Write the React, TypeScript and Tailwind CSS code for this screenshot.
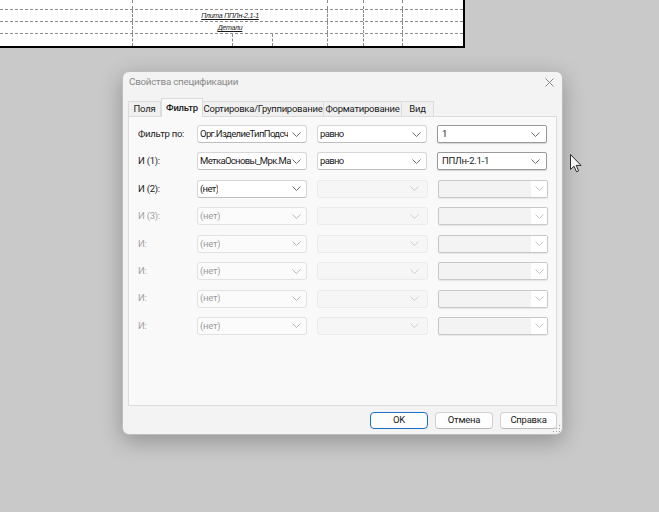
import React from "react";

type Variant = "enabled" | "edit" | "dis1" | "dis2" | "editDis";

function Chevron({ color }: { color: string }) {
  return (
    <svg width="9" height="5" viewBox="0 0 9 5" className="shrink-0">
      <path d="M0.5 0.5 L4.5 4.5 L8.5 0.5" fill="none" stroke={color} strokeWidth="1" />
    </svg>
  );
}

function Combo({ v, text }: { v: Variant; text?: string }) {
  if (v === "enabled") {
    return (
      <div className="flex h-[18px] w-[110px] items-center justify-between rounded-[3px] border border-[#d6d6d6] border-b-[#bdbdbd] bg-white pl-[2px] pr-[5px]">
        <span className="min-w-0 overflow-hidden whitespace-nowrap tracking-[-0.65px] text-[#1b1b1b]">{text}</span>
        <Chevron color="#6a6a6a" />
      </div>
    );
  }
  if (v === "edit") {
    return (
      <div className="flex h-[18px] w-[110px] items-center justify-between rounded-[2px] border border-[#9a9a9a] bg-white pl-[4px] pr-[6px] shadow-[0_1px_1px_rgba(0,0,0,0.15)]">
        <span className="min-w-0 overflow-hidden whitespace-nowrap text-[#1b1b1b]">{text}</span>
        <Chevron color="#6a6a6a" />
      </div>
    );
  }
  if (v === "dis1") {
    return (
      <div className="flex h-[18px] w-[110px] items-center justify-between rounded-[3px] border border-[#e2e2e2] bg-[#fbfbfb] pl-[2px] pr-[5px]">
        <span className="min-w-0 overflow-hidden whitespace-nowrap text-[#9c9c9c]">{text}</span>
        <Chevron color="#b8b8b8" />
      </div>
    );
  }
  if (v === "dis2") {
    return (
      <div className="flex h-[18px] w-[111px] items-center justify-end rounded-[3px] border border-[#ebebeb] bg-[#f6f6f6] pr-[8px]">
        <Chevron color="#cfcfcf" />
      </div>
    );
  }
  return (
    <div className="flex h-[18px] w-[110px] items-center rounded-[2px] border border-[#c8c8c8] bg-[#f3f3f3] shadow-[0_1px_1px_rgba(0,0,0,0.08)]">
      <div className="h-full flex-1" />
      <div className="flex h-full w-[16px] items-center justify-center bg-white">
        <Chevron color="#c4c4c4" />
      </div>
    </div>
  );
}

const rows: { label: string; dim: boolean; c1: [Variant, string]; c2: [Variant, string]; c3: [Variant, string] }[] = [
  { label: "Фильтр по:", dim: false, c1: ["enabled", "Орг.ИзделиеТипПодсч"], c2: ["enabled", "равно"], c3: ["edit", "1"] },
  { label: "И (1):", dim: false, c1: ["enabled", "МеткаОсновы_Мрк.Ма"], c2: ["enabled", "равно"], c3: ["edit", "ППЛн-2.1-1"] },
  { label: "И (2):", dim: false, c1: ["enabled", "(нет)"], c2: ["dis2", ""], c3: ["editDis", ""] },
  { label: "И (3):", dim: true, c1: ["dis1", "(нет)"], c2: ["dis2", ""], c3: ["editDis", ""] },
  { label: "И:", dim: true, c1: ["dis1", "(нет)"], c2: ["dis2", ""], c3: ["editDis", ""] },
  { label: "И:", dim: true, c1: ["dis1", "(нет)"], c2: ["dis2", ""], c3: ["editDis", ""] },
  { label: "И:", dim: true, c1: ["dis1", "(нет)"], c2: ["dis2", ""], c3: ["editDis", ""] },
  { label: "И:", dim: true, c1: ["dis1", "(нет)"], c2: ["dis2", ""], c3: ["editDis", ""] },
];

function Drawing() {
  const cell = "border-r border-dashed border-[#8c8c8c]";
  const Row = ({ h, children, last }: { h: string; children?: React.ReactNode; last?: boolean }) => (
    <div className={`flex ${h} ${last ? "" : "border-b border-dashed border-[#8c8c8c]"}`}>{children}</div>
  );
  return (
    <div className="h-[48px] w-[465px] border-b-2 border-r-2 border-black bg-white font-['Liberation_Sans',sans-serif]">
      <Row h="h-[10px]">
        <div className={`w-[133px] ${cell}`} />
        <div className={`w-[195px] ${cell}`} />
        <div className={`w-[36px] ${cell}`} />
        <div className={`w-[39px] ${cell}`} />
      </Row>
      <Row h="h-[12px]">
        <div className={`w-[133px] ${cell}`} />
        <div className={`flex w-[195px] items-center justify-center ${cell}`}>
          <span className="text-[7px] italic leading-none text-[#1a1a1a] underline">Плита ППЛн-2.1-1</span>
        </div>
        <div className={`w-[36px] ${cell}`} />
        <div className={`w-[39px] ${cell}`} />
      </Row>
      <Row h="h-[12px]">
        <div className={`w-[133px] ${cell}`} />
        <div className={`flex w-[195px] items-center justify-center ${cell}`}>
          <span className="text-[7px] italic leading-none text-[#1a1a1a] underline">Детали</span>
        </div>
        <div className={`w-[36px] ${cell}`} />
        <div className={`w-[39px] ${cell}`} />
      </Row>
      <Row h="h-[12px]" last>
        <div className={`w-[133px] ${cell}`} />
        <div className={`w-[100px] ${cell}`} />
        <div className={`w-[40px] ${cell}`} />
        <div className={`w-[55px] ${cell}`} />
        <div className={`w-[36px] ${cell}`} />
        <div className={`w-[39px] ${cell}`} />
      </Row>
    </div>
  );
}

export default function App() {
  const tabs = [
    { t: "Поля", w: "w-[33px]" },
    { t: "Фильтр", w: "w-[42px]", sel: true },
    { t: "Сортировка/Группирование", w: "w-[122px]" },
    { t: "Форматирование", w: "w-[79px]" },
    { t: "Вид", w: "w-[33px]" },
  ];
  return (
    <div className="relative h-[512px] w-[659px] overflow-hidden bg-[#c9c9c9] font-['Roboto','Liberation_Sans',sans-serif] text-[9.5px] tracking-[-0.25px]">
      <Drawing />

      {/* Dialog window */}
      <div className="absolute left-[122px] top-[71px] flex h-[364px] w-[441px] flex-col rounded-[7px] border border-[#bdbdbd] bg-[#f3f3f3] shadow-[0_6px_22px_rgba(0,0,0,0.28)]">
        <div className="flex h-[21px] items-center justify-between pl-[6px] pr-[8px]">
          <span className="text-[9.8px] text-[#8a8a8a]">Свойства спецификации</span>
          <svg width="9" height="9" viewBox="0 0 9 9">
            <path d="M0.5 0.5 L8.5 8.5 M8.5 0.5 L0.5 8.5" stroke="#8a8a8a" strokeWidth="1" />
          </svg>
        </div>

        <div className="mx-[5px] mt-[4px] flex h-[19px] items-end">
          {tabs.map((tb) =>
            tb.sel ? (
              <div
                key={tb.t}
                className={`${tb.w} relative z-10 -mb-px flex h-[19px] items-center justify-center whitespace-nowrap border border-b-0 border-[#dcdcdc] bg-[#f9f9f9] font-medium text-[#1b1b1b]`}
              >
                {tb.t}
              </div>
            ) : (
              <div
                key={tb.t}
                className={`${tb.w} -ml-px flex h-[15px] items-center justify-center whitespace-nowrap border border-b-0 border-[#dcdcdc] bg-[#f0f0f0] text-[#1b1b1b] first:ml-0`}
              >
                {tb.t}
              </div>
            )
          )}
        </div>

        <div className="mx-[5px] h-[290px] border border-[#dcdcdc] bg-[#f9f9f9] pl-[9px] pt-[8px]">
          <div className="flex flex-col gap-y-[9.43px]">
            {rows.map((r, i) => (
              <div key={i} className="flex h-[18px] items-center">
                <span className={`w-[59px] whitespace-nowrap ${r.dim ? "text-[#a3a3a3]" : "text-[#1b1b1b]"}`}>{r.label}</span>
                <Combo v={r.c1[0]} text={r.c1[1]} />
                <div className="w-[10px]" />
                <Combo v={r.c2[0]} text={r.c2[1]} />
                <div className="w-[10px]" />
                <Combo v={r.c3[0]} text={r.c3[1]} />
              </div>
            ))}
          </div>
        </div>

        <div className="mr-[5px] mt-[6px] flex justify-end gap-[7px]">
          <button className="flex h-[17px] w-[58px] items-center justify-center rounded-[4px] border border-[#1a6fc4] bg-[#fdfdfd] text-[#1b1b1b]">
            OK
          </button>
          <button className="flex h-[17px] w-[58px] items-center justify-center rounded-[4px] border border-[#d2d2d2] border-b-[#b9b9b9] bg-[#fdfdfd] text-[#1b1b1b]">
            Отмена
          </button>
          <button className="flex h-[17px] w-[57px] items-center justify-center rounded-[4px] border border-[#d2d2d2] border-b-[#b9b9b9] bg-[#fdfdfd] text-[#1b1b1b]">
            Справка
          </button>
        </div>

        <svg className="absolute bottom-[1px] right-[1px]" width="8" height="8" viewBox="0 0 8 8">
          <rect x="6" y="0" width="1" height="1" fill="#a0a0a0" />
          <rect x="3" y="3" width="1" height="1" fill="#a0a0a0" />
          <rect x="6" y="3" width="1" height="1" fill="#a0a0a0" />
          <rect x="0" y="6" width="1" height="1" fill="#a0a0a0" />
          <rect x="3" y="6" width="1" height="1" fill="#a0a0a0" />
          <rect x="6" y="6" width="1" height="1" fill="#a0a0a0" />
        </svg>
      </div>

      {/* Mouse cursor */}
      <svg className="absolute left-[570px] top-[154px]" width="12" height="19" viewBox="0 0 12 19">
        <path d="M0.5 0.5 L0.5 15.5 L4 12.2 L6.5 17.8 L8.6 16.9 L6.2 11.4 L11 11.4 Z" fill="#f4f4f4" stroke="#2a2a2a" strokeWidth="1" strokeLinejoin="round" />
      </svg>
    </div>
  );
}
